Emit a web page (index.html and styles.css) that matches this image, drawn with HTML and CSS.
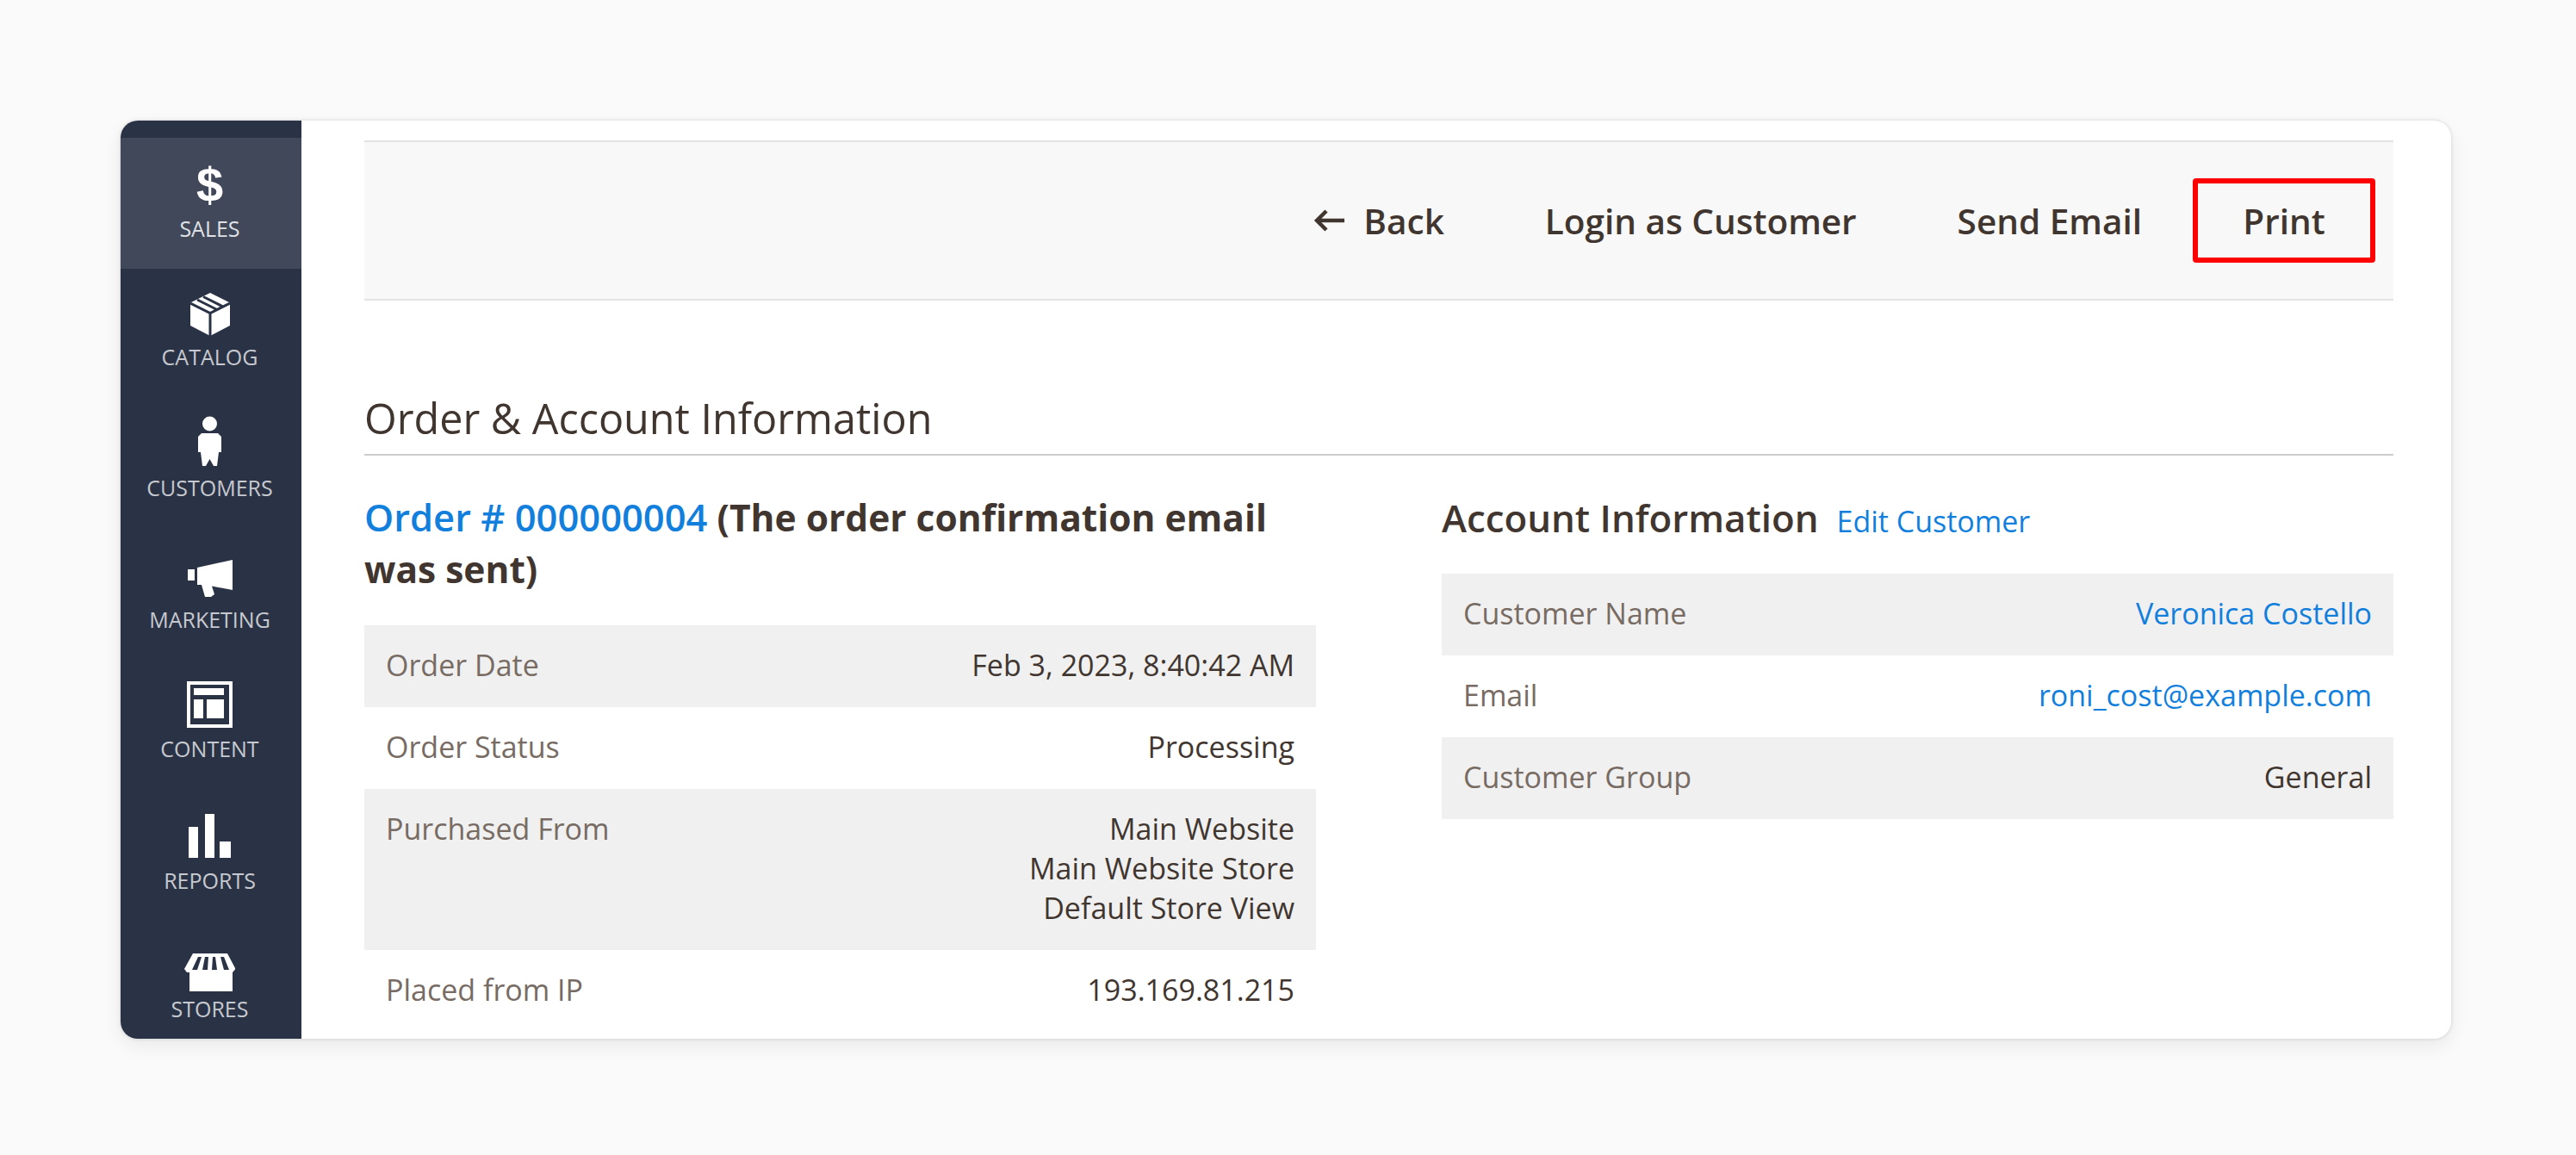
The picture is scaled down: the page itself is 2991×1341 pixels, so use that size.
FILE: index.html
```html
<!DOCTYPE html>
<html lang="en">
<head>
<meta charset="utf-8">
<title>Order &amp; Account Information</title>
<link rel="stylesheet" href="styles.css">
</head>
<body>
<div class="card">
  <nav class="sidebar">
    <a class="nav-item nav-sales is-active">
      <span class="dollar">$</span>
      <span class="nav-label">SALES</span>
    </a>
    <a class="nav-item nav-catalog">
      <svg class="icon" width="46" height="50" viewBox="0 0 46 50"><path fill="#fff" d="M23 0 46 11.500V38L23 50 0 38V11.500Z"/><path fill="none" stroke="#2a3245" stroke-width="3" d="M0 12 23 23.500 46 12M23 23.500V50M15 4.500 38 16M8 8 31 19.500"/></svg>
      <span class="nav-label">CATALOG</span>
    </a>
    <a class="nav-item nav-customers">
      <svg class="icon" width="27" height="59" viewBox="0 0 27 59"><circle fill="#fff" cx="13.500" cy="9" r="8.500"/><path fill="#fff" d="M4 20H23L27 24V42H24L22 58H18L13.500 50 9 58H5L3 42H0V24Z"/></svg>
      <span class="nav-label">CUSTOMERS</span>
    </a>
    <a class="nav-item nav-marketing">
      <svg class="icon" width="52" height="43" viewBox="0 0 52 43"><path fill="#fff" d="M0 11H8V24H0ZM11 9 52 0V35L28 30.500 31 40 27 43H20L16 29H11Z"/></svg>
      <span class="nav-label">MARKETING</span>
    </a>
    <a class="nav-item nav-content">
      <svg class="icon" width="53" height="54" viewBox="0 0 53 54"><path fill="#fff" fill-rule="evenodd" d="M0 0H53V54H0ZM4 4V50H49V4ZM8 8H43V16H8ZM8 21H19V43H8ZM23 21H43V43H23Z"/></svg>
      <span class="nav-label">CONTENT</span>
    </a>
    <a class="nav-item nav-reports">
      <svg class="icon" width="49" height="51" viewBox="0 0 49 51"><path fill="#fff" d="M0 15H11V51H0ZM19 0H30V51H19ZM36 32H49V51H36Z"/></svg>
      <span class="nav-label">REPORTS</span>
    </a>
    <a class="nav-item nav-stores">
      <svg class="icon" width="59" height="47" viewBox="0 0 59 47"><path fill="#fff" fill-rule="evenodd" d="M10 3H50L59.500 21 56 25V47H6V25H3L0 21ZM16 7H20L15 22H9ZM24 7H28L27 22H21ZM33 7H36L38 22H32ZM42 7H46L52 22H46Z"/></svg>
      <span class="nav-label">STORES</span>
    </a>
  </nav>
  <main class="main">
    <div class="toolbar">
      <a class="tool tool-back"><svg class="back-arrow" width="36" height="28" viewBox="0 0 36 28"><path fill="none" stroke="#41362f" stroke-width="4.500" d="M36 14H4M15 3 4 14 15 25"/></svg>Back</a>
      <a class="tool tool-login">Login as Customer</a>
      <a class="tool tool-email">Send Email</a>
      <a class="tool tool-print">Print</a>
    </div>
    <h2 class="section-title">Order &amp; Account Information</h2>
    <div class="columns">
      <section class="col">
        <h3 class="order-head"><a class="link">Order # 000000004</a> (The order confirmation email was sent)</h3>
        <div class="info-table">
          <div class="row"><span class="key">Order Date</span><span class="val">Feb 3, 2023, 8:40:42 AM</span></div>
          <div class="row"><span class="key">Order Status</span><span class="val">Processing</span></div>
          <div class="row"><span class="key">Purchased From</span><span class="val">Main Website<br>Main Website Store<br>Default Store View</span></div>
          <div class="row"><span class="key">Placed from IP</span><span class="val">193.169.81.215</span></div>
        </div>
      </section>
      <section class="col">
        <div class="account-head"><h3 class="account-title">Account Information</h3><a class="link edit-link">Edit Customer</a></div>
        <div class="info-table">
          <div class="row"><span class="key">Customer Name</span><a class="val link">Veronica Costello</a></div>
          <div class="row"><span class="key">Email</span><a class="val link">roni_cost@example.com</a></div>
          <div class="row"><span class="key">Customer Group</span><span class="val">General</span></div>
        </div>
      </section>
    </div>
  </main>
</div>
</body>
</html>
```
FILE: styles.css
```css
* { box-sizing: border-box; }
html, body { margin: 0; height: 100%; }
body {
  background: #fafafa;
  padding: 140px 145px 0 140px;
  font-family: "Open Sans", sans-serif;
  color: #41362f;
  overflow: hidden;
}
.card {
  display: flex;
  height: 1066px;
  background: #fff;
  border-radius: 20px;
  overflow: hidden;
  box-shadow: 0 0 4px rgba(0,0,0,.14), 0 8px 22px rgba(0,0,0,.07);
}
.sidebar {
  flex: 0 0 210px;
  background: #2a3245;
  padding-top: 20px;
}
.nav-item {
  display: flex;
  flex-direction: column;
  align-items: center;
  height: 152px;
  padding-right: 3px;
}
.nav-label {
  font-size: 25px;
  line-height: 30px;
  color: #c6c9cf;
  white-space: nowrap;
}
.icon { display: block; flex: none; }
.is-active { background: #41485a; }
.is-active .nav-label { color: #dfe1e5; }
.dollar {
  font-family: "Liberation Sans", sans-serif;
  font-weight: 700;
  font-size: 56px;
  line-height: 50px;
  height: 50px;
  color: #fff;
  margin-top: 30px;
  margin-bottom: 10px;
}
.nav-catalog { padding-top: 28px; }
.nav-catalog .icon { margin-bottom: 9px; }
.nav-customers { padding-top: 19px; }
.nav-customers .icon { margin-bottom: 9px; }
.nav-marketing { padding-top: 34px; }
.nav-marketing .icon { margin-bottom: 11px; }
.nav-content { padding-top: 23px; }
.nav-content .icon { margin-bottom: 9px; }
.nav-reports { padding-top: 25px; }
.nav-reports .icon { margin-bottom: 11px; }
.nav-stores { padding-top: 32px; }
.nav-stores .icon { margin-bottom: 5px; }

.main {
  flex: 1;
  padding: 23px 67px 0 73px;
  min-width: 0;
}
.toolbar {
  display: flex;
  align-items: center;
  justify-content: flex-end;
  height: 186px;
  background: #f8f8f8;
  border-top: 2px solid #e3e3e3;
  border-bottom: 2px solid #e3e3e3;
  padding-right: 21px;
}
.tool {
  display: flex;
  align-items: center;
  font-size: 40.500px;
  font-weight: 600;
  height: 98px;
  margin-left: 117px;
  white-space: nowrap;
}
.tool-back { margin-left: 0; }
.back-arrow { margin-right: 22px; }
.tool-print {
  width: 212px;
  margin-left: 59px;
  justify-content: center;
  border: 6px solid #ff0000;
  border-radius: 4px;
}
.section-title {
  margin: 112px 0 0;
  height: 66px;
  font-size: 48.500px;
  line-height: 48px;
  font-weight: 400;
  border-bottom: 2px solid #cccccc;
  box-sizing: content-box;
}
.columns {
  display: flex;
  gap: 146px;
  margin-top: 42px;
}
.col { flex: 1; min-width: 0; }
.order-head {
  margin: 0 0 35px;
  font-size: 42.500px;
  line-height: 60px;
  font-weight: 700;
}
.link { color: #127fdd; }
.order-head .link { font-size: 43.500px; font-weight: 600; }
.account-head {
  display: flex;
  align-items: baseline;
  gap: 21px;
  margin-bottom: 35px;
  height: 60px;
}
.account-title {
  margin: 0;
  font-size: 43.800px;
  line-height: 60px;
  font-weight: 600;
}
.edit-link { font-size: 34px; }
.row {
  display: flex;
  justify-content: space-between;
  padding: 23px 25px 26px;
  font-size: 34px;
  line-height: 46px;
}
.row:nth-child(odd) { background: #f0f0f0; }
.key { color: #776b63; }
.val { text-align: right; }
```
